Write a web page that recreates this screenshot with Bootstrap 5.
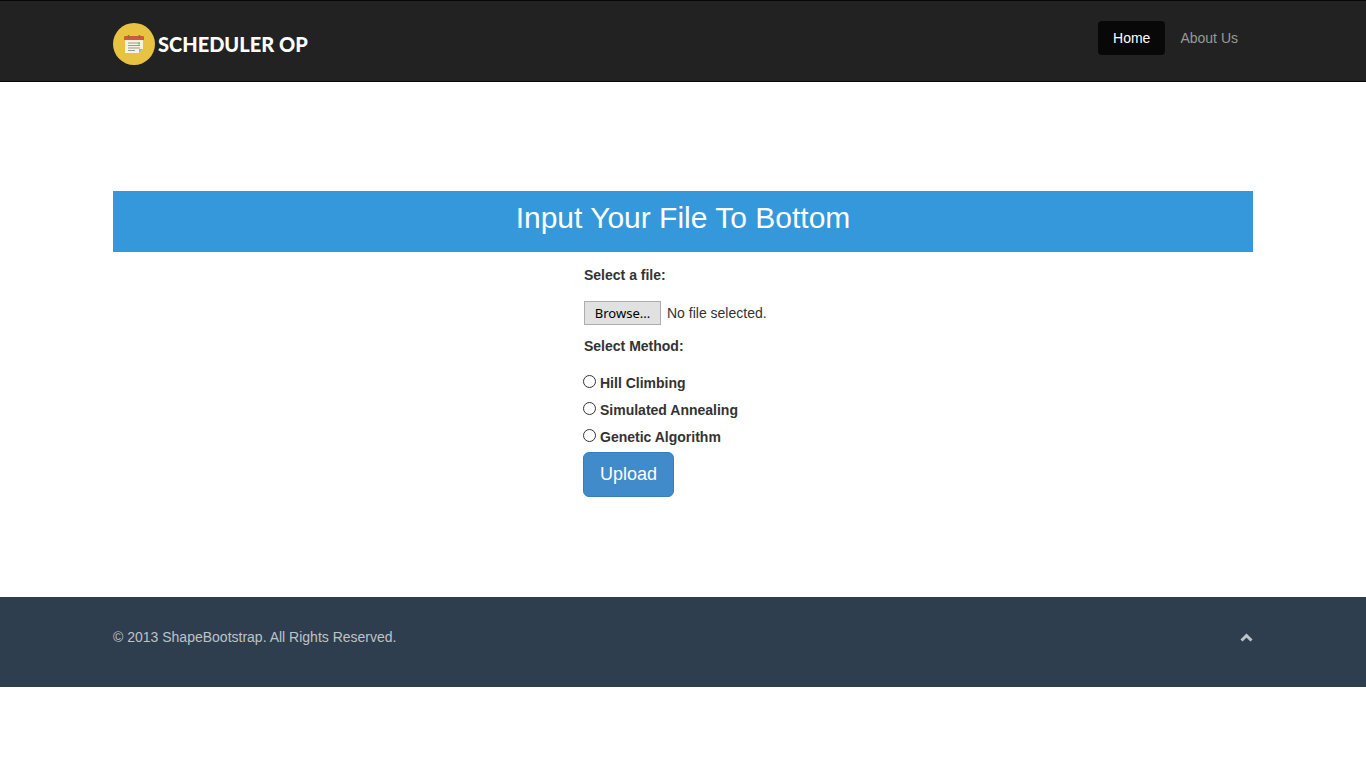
<!DOCTYPE html>
<html lang="en">
<head>
<meta charset="utf-8">
<meta name="viewport" content="width=device-width, initial-scale=1">
<title>Scheduler OP</title>
<link href="https://cdn.jsdelivr.net/npm/bootstrap@5.3.0/dist/css/bootstrap.min.css" rel="stylesheet">
<style>
  body { font-family: "Liberation Sans", Arial, sans-serif; font-size: 14px; line-height: 20px; color: #34495e; background: #fff; }
  .container { max-width: 1170px; padding-left: 15px; padding-right: 15px; }
  .site-header { background: #222; border: solid #080808; border-width: 1px 0; padding: 20px 0 16px; }
  .brand-link { gap: 3px; padding-top: 2px; }
  .brand-name { font-family: "Britannic Bold", "Lato Black", Lato, sans-serif; font-weight: 900; font-size: 20px; line-height: 24px; color: #fff; }
  .site-nav .nav-link { color: #999; padding: 7px 15px; border-radius: 4px; line-height: 20px; }
  .site-nav .nav-link:hover { color: #fff; }
  .site-nav .nav-link.active { color: #fff; background: #080808; }
  .upload-area { padding: 109px 0 100px; }
  .banner { background: #3498db; color: #fff; font-size: 30px; line-height: 34px; padding: 10px 0 17px; }
  .upload-form { width: 200px; padding-top: 13px; color: #333; }
  .field-title { font-size: 14px; line-height: 20px; font-weight: 700; padding-left: 1px; }
  .file-pick { gap: 6px; margin: 16px 0 11px; padding-left: 1px; }
  .browse { background: #e1e1e1; border: 1px solid #adadad; color: #000; font-family: "Noto Sans", "Open Sans", sans-serif; font-size: 13px; line-height: 22px; width: 77px; }
  .methods { margin-bottom: 2px; }
  .methods legend { margin-bottom: 13px; }
  .method { gap: 4px; height: 27px; font-weight: 700; }
  .method input { appearance: none; width: 13px; height: 13px; margin: 0 0 3px; border: 1px solid #333; border-radius: 50%; background: #fff; }
  .method input:checked { background: #333; box-shadow: inset 0 0 0 3px #fff; }
  .btn-upload { --bs-btn-color: #fff; --bs-btn-bg: #428bca; --bs-btn-border-color: #357ebd; --bs-btn-hover-color: #fff; --bs-btn-hover-bg: #3276b1; --bs-btn-hover-border-color: #285e8e; font-size: 18px; line-height: 23px; padding: 10px 16px; border-radius: 6px; }
  .site-footer { background: #2e3e4e; color: #bdc3c7; padding: 30px 0 40px; }
  .site-footer a { color: #bdc3c7; }
</style>
</head>
<body>
<header class="site-header">
  <div class="container d-flex justify-content-between align-items-start">
    <a class="brand-link d-flex align-items-center text-decoration-none" href="#">
      <svg class="d-block" width="42" height="42" viewBox="0 0 42 42" aria-hidden="true">
        <circle cx="21" cy="21" r="21" fill="#e8c342"/>
        <path d="M12 17h18v9l-4 4H12z" fill="#f8f3dc"/>
        <path d="M12 13h18q1 0 1 1v3H11v-3q0-1 1-1z" fill="#d4573a"/>
        <path d="M15.500 12v3M26.500 12v3" stroke="#7c6b68" stroke-width="1.500"/>
        <path d="M15 20h12M15 22.500h12M15 25h12M15 27.500h7" stroke="#979b91" stroke-width="1"/>
        <path d="M26 19.500v2" stroke="#51b6a1" stroke-width="1.500"/>
        <path d="M26 30v-4h4z" fill="#71c9bb"/>
      </svg>
      <span class="brand-name">SCHEDULER OP</span>
    </a>
    <ul class="nav site-nav">
      <li class="nav-item"><a class="nav-link active" aria-current="page" href="#">Home</a></li>
      <li class="nav-item"><a class="nav-link" href="#">About Us</a></li>
    </ul>
  </div>
</header>

<main class="upload-area">
  <div class="container">
    <h1 class="banner text-center fw-normal mb-0">Input Your File To Bottom</h1>
    <form class="upload-form mx-auto">
      <label class="field-title d-block" for="file">Select a file:</label>
      <div class="file-pick d-flex align-items-center position-relative">
        <span class="browse text-center" aria-hidden="true">Browse...</span>
        <span aria-hidden="true">No file selected.</span>
        <input class="position-absolute top-0 start-0 w-100 h-100 opacity-0" type="file" id="file">
      </div>
      <fieldset class="methods">
        <legend class="field-title float-none">Select Method:</legend>
        <div class="method d-flex align-items-center"><input type="radio" name="method" id="hill"><label for="hill">Hill Climbing</label></div>
        <div class="method d-flex align-items-center"><input type="radio" name="method" id="annealing"><label for="annealing">Simulated Annealing</label></div>
        <div class="method d-flex align-items-center"><input type="radio" name="method" id="genetic"><label for="genetic">Genetic Algorithm</label></div>
      </fieldset>
      <button class="btn btn-upload" type="submit">Upload</button>
    </form>
  </div>
</main>

<footer class="site-footer">
  <div class="container d-flex justify-content-between align-items-center">
    <span>© 2013 ShapeBootstrap. All Rights Reserved.</span>
    <a class="d-block" href="#" aria-label="Back to top"><svg class="d-block" width="13" height="9" viewBox="0 0 13 9" aria-hidden="true"><path d="M1.500 7.500l5-5 5 5" fill="none" stroke="currentColor" stroke-width="3"/></svg></a>
  </div>
</footer>
<script src="https://cdn.jsdelivr.net/npm/bootstrap@5.3.0/dist/js/bootstrap.bundle.min.js"></script>
</body>
</html>
